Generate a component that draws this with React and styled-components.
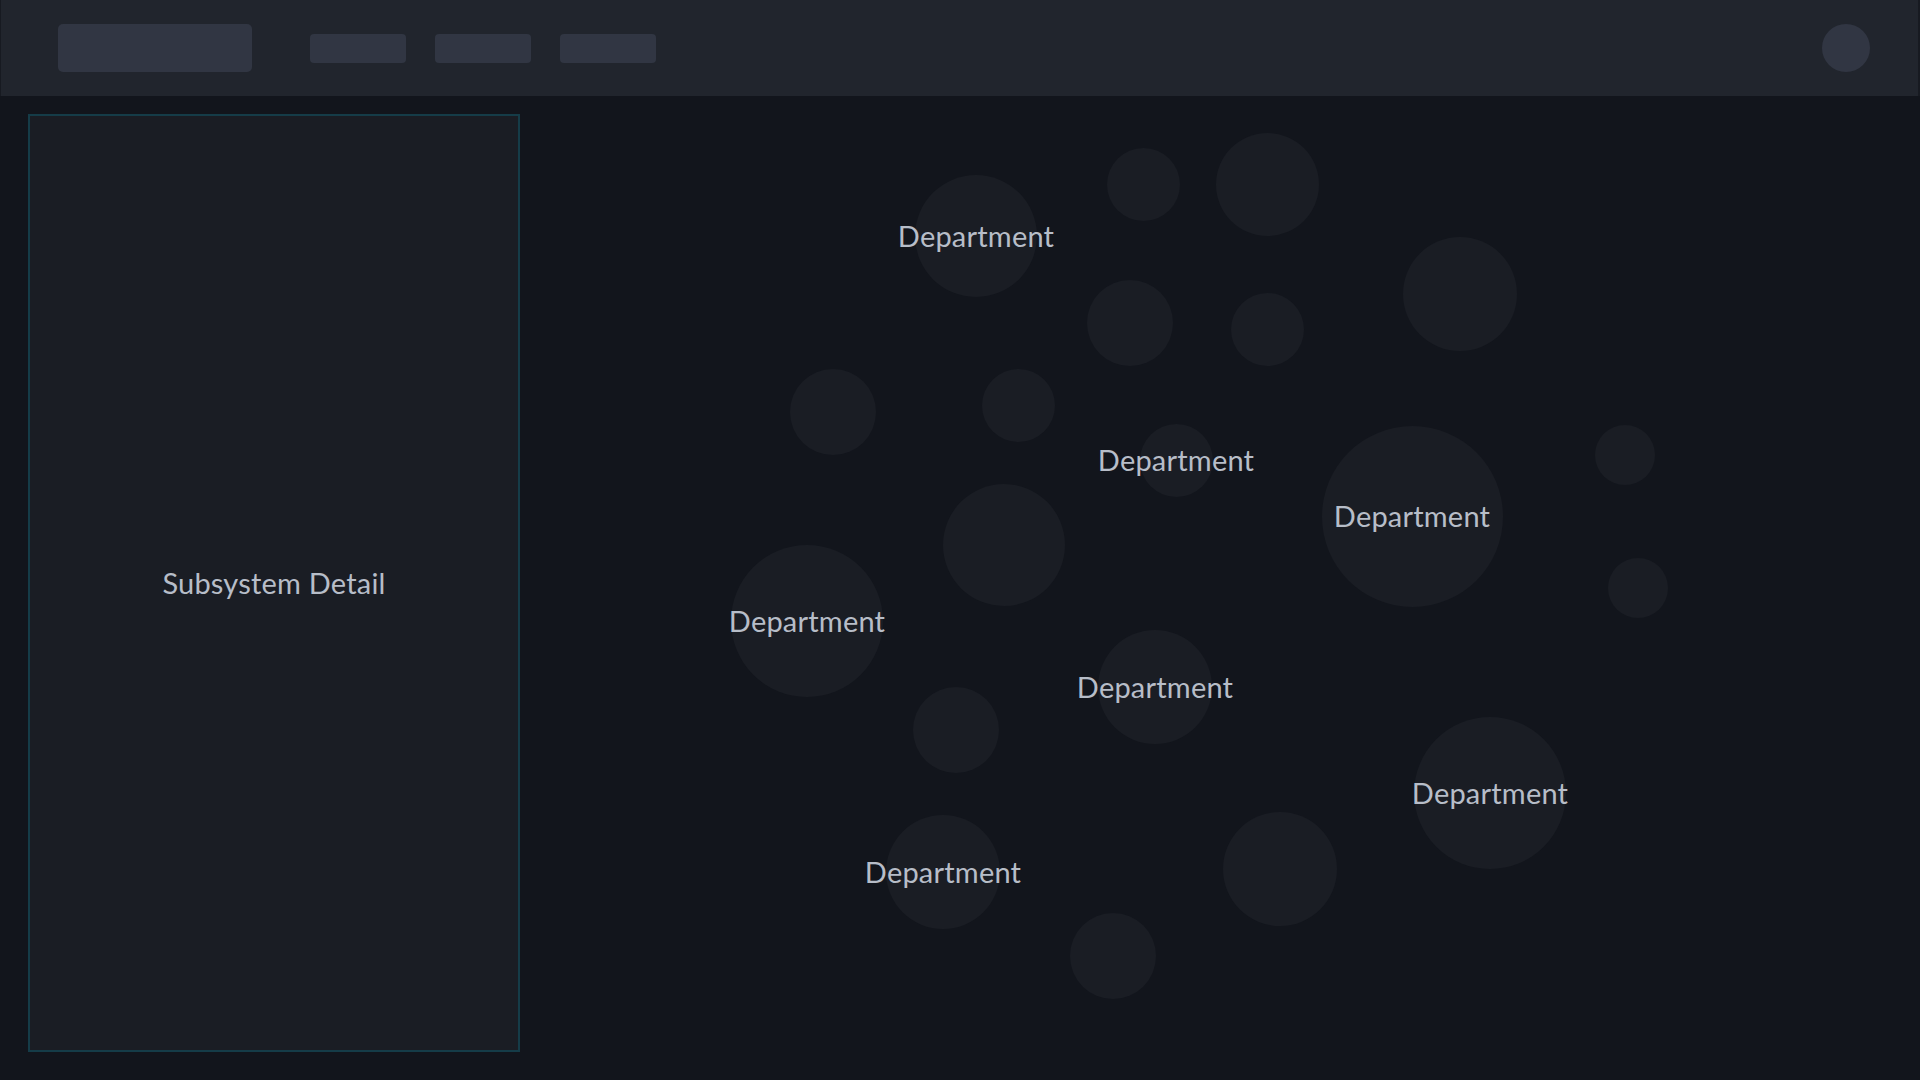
import React from 'react';
import styled, { createGlobalStyle } from 'styled-components';

const GlobalStyle = createGlobalStyle`
  html, body {
    margin: 0;
    padding: 0;
    background: #12151c;
    font-family: Lato, "Noto Sans", sans-serif;
  }
  * { box-sizing: border-box; }
`;

const Page = styled.div`
  width: 1920px;
  height: 1080px;
  display: flex;
  flex-direction: column;
  background: #12151c;
  overflow: hidden;
`;

const TopBar = styled.header`
  height: 96px;
  flex-shrink: 0;
  display: flex;
  align-items: center;
  padding: 0 48px 0 57px;
  background: #21252d;
  border-left: 1px solid #171a21;
  border-right: 2px solid #171a21;
`;

const Logo = styled.div`
  width: 194px;
  height: 48px;
  flex-shrink: 0;
  border-radius: 5px;
  background: #313643;
`;

const Nav = styled.nav`
  display: flex;
  gap: 29px;
  margin-left: 58px;
`;

const NavItem = styled.div`
  width: 96px;
  height: 29px;
  flex-shrink: 0;
  border-radius: 4px;
  background: #313643;
`;

const Avatar = styled.div`
  width: 48px;
  height: 48px;
  flex-shrink: 0;
  margin-left: auto;
  border-radius: 50%;
  background: #313643;
`;

const Main = styled.main`
  flex: 1;
  display: flex;
  padding: 18px 0 28px 28px;
  min-height: 0;
`;

const DetailPanel = styled.aside`
  width: 492px;
  flex-shrink: 0;
  display: flex;
  align-items: center;
  justify-content: center;
  padding-bottom: 2px;
  background: #1a1d24;
  border: 2px solid #153c48;
`;

const PanelTitle = styled.span`
  font-size: 29px;
  color: #b7bdc8;
  letter-spacing: 0.2px;
`;

const Canvas = styled.section`
  flex: 1;
  position: relative;
`;

const Bubble = styled.div`
  position: absolute;
  border-radius: 50%;
  background: #1a1d24;
  display: flex;
  align-items: center;
  justify-content: center;
  padding-bottom: 2px;
`;

const BubbleLabel = styled.span`
  white-space: nowrap;
  font-size: 29px;
  color: #b7bdc8;
  letter-spacing: 0.2px;
`;

// canvas origin on the page
const ORIGIN_X = 520;
const ORIGIN_Y = 114;

const bubbles = [
  { x: 976, y: 236, d: 122, label: 'Department' },
  { x: 1143, y: 184, d: 73 },
  { x: 1267, y: 184, d: 103 },
  { x: 1130, y: 323, d: 86 },
  { x: 1267, y: 329, d: 73 },
  { x: 1460, y: 294, d: 114 },
  { x: 833, y: 412, d: 86 },
  { x: 1018, y: 405, d: 73 },
  { x: 1176, y: 460, d: 73, label: 'Department' },
  { x: 1412, y: 516, d: 181, label: 'Department' },
  { x: 1625, y: 455, d: 60 },
  { x: 1638, y: 588, d: 60 },
  { x: 1004, y: 545, d: 122 },
  { x: 807, y: 621, d: 152, label: 'Department' },
  { x: 1155, y: 687, d: 114, label: 'Department' },
  { x: 956, y: 730, d: 86 },
  { x: 1490, y: 793, d: 152, label: 'Department' },
  { x: 943, y: 872, d: 114, label: 'Department' },
  { x: 1280, y: 869, d: 114 },
  { x: 1113, y: 956, d: 86 },
];

const App = () => {
  return (
    <>
      <GlobalStyle />
      <Page>
        <TopBar>
          <Logo />
          <Nav>
            <NavItem />
            <NavItem />
            <NavItem />
          </Nav>
          <Avatar />
        </TopBar>
        <Main>
          <DetailPanel>
            <PanelTitle>Subsystem Detail</PanelTitle>
          </DetailPanel>
          <Canvas>
            {bubbles.map((b, i) => (
              <Bubble
                key={i}
                style={{
                  left: b.x - ORIGIN_X - b.d / 2,
                  top: b.y - ORIGIN_Y - b.d / 2,
                  width: b.d,
                  height: b.d,
                }}
              >
                {b.label && <BubbleLabel>{b.label}</BubbleLabel>}
              </Bubble>
            ))}
          </Canvas>
        </Main>
      </Page>
    </>
  );
};

export default App;
